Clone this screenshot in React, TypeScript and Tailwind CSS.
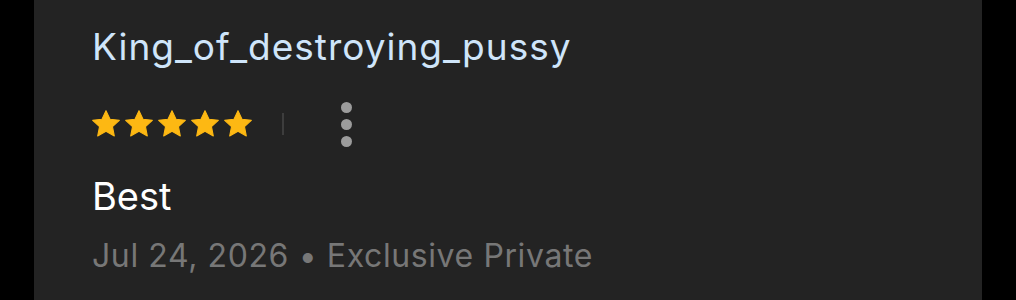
function Star() {
  return (
    <svg width="28" height="28" viewBox="1.7 1.7 20.6 20.6" className="shrink-0">
      <path
        d="M12 2.2l2.95 6.3 6.85.8-5.05 4.7 1.35 6.8L12 17.4l-6.1 3.4 1.35-6.8L2.2 9.3l6.85-.8L12 2.2z"
        fill="#FDB813"
        stroke="#FDB813"
        strokeWidth="0.8"
        strokeLinejoin="round"
      />
    </svg>
  );
}

export default function App() {
  return (
    <div className="w-[1016px] h-[300px] bg-black flex overflow-hidden" style={{ fontFamily: 'Inter, "Noto Sans", sans-serif' }}>
      <div className="ml-[34px] w-[948px] h-full bg-[#232323] pl-[58px] pt-[25px] flex flex-col">
        <div className="text-[37px] leading-[44px] text-[#cfe5fa] tracking-[1px]">King_of_destroying_pussy</div>
        <div className="flex items-center mt-[35px] h-[40px]">
          <div className="flex gap-[5px]">
            <Star />
            <Star />
            <Star />
            <Star />
            <Star />
          </div>
          <div className="ml-[30px] w-[2px] h-[22px] bg-[#3d3d3d]" />
          <div className="ml-[57px] flex flex-col gap-[6px]">
            <span className="w-[11px] h-[11px] rounded-full bg-[#9c9c9c]" />
            <span className="w-[11px] h-[11px] rounded-full bg-[#9c9c9c]" />
            <span className="w-[11px] h-[11px] rounded-full bg-[#9c9c9c]" />
          </div>
        </div>
        <div className="mt-[29px] text-[38px] leading-[46px] text-white">Best</div>
        <div className="mt-[17px] text-[32px] leading-[40px] text-[#777777] tracking-[0.6px]">
          Jul 24, 2026 • Exclusive Private
        </div>
      </div>
    </div>
  );
}
